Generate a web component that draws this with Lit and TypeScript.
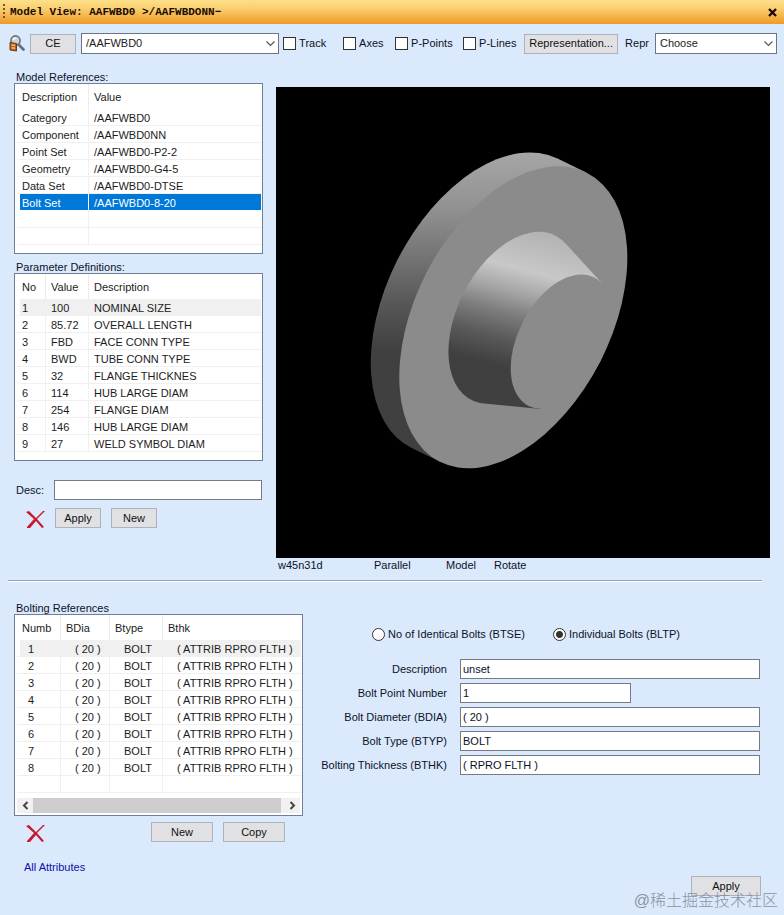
import { LitElement, html, css, svg, nothing } from "lit";
import { customElement, property } from "lit/decorators.js";

const controls = css`
  * { box-sizing: border-box; }
  button, input, select { font: inherit; color: inherit; margin: 0; border-radius: 0; }
  button {
    height: 20px;
    padding: 0;
    background: #e1e1e3;
    border: 1px solid #adb3bb;
    color: #111;
  }
  .text {
    height: 20px;
    width: 100%;
    padding: 0 2px;
    background: #fff;
    border: 1px solid #747b86;
    outline: none;
  }
`;

const cross = svg`
  <path d="M0 4 L3 3 L10 10 L17 3 L19 3 L11 11 L18 19 L16 20 L10 13 L4 20 L1 20 L1 19 L8 11 Z" fill="#c8182c"/>`;

type Row = string[];

/** List box with a header row, hairline grid and an optional scroll bar. */
@customElement("data-list")
export class DataList extends LitElement {
  @property() caption = "";
  @property({ attribute: false }) heads: string[] = [];
  @property({ attribute: false }) rows: Row[] = [];
  @property({ attribute: false }) widths: number[] = [];
  @property({ type: Number }) blanks = 0;
  @property({ type: Number }) selected = -1;
  @property({ type: Number }) shaded = -1;
  @property({ type: Boolean }) indent = false;
  @property({ type: Boolean }) scroll = false;

  static styles = [controls, css`
    :host { display: block; }
    .title { margin: 0 0 0 2px; font: inherit; line-height: 13px; padding-top: 1px; height: 13px; }
    .box { background: #fff; border: 1px solid #717f96; color: #1c1c1c; padding-bottom: 8px; }
    .box.scrolled { padding-bottom: 2px; }
    table { width: 100%; table-layout: fixed; border-collapse: separate; border-spacing: 0; }
    th, td { padding: 2px 0 0 5px; text-align: left; font-weight: normal; white-space: nowrap; overflow: hidden; }
    th:first-child, td:first-child { border-left: 5px solid transparent; padding-left: 2px; background-clip: padding-box; }
    th { height: 25px; border-right: 1px solid #ececec; }
    td { height: 17px; line-height: 14px; border-bottom: 1px solid #f0f0f0; border-right: 1px solid #f0f0f0; }
    th:last-child, td:last-child { border-right: 1px solid transparent; background-clip: padding-box; }
    .indent td { padding-left: 14px; }
    .indent td:first-child { padding-left: 8px; }
    .shaded td { background-color: #f0f0f0; }
    .selected td { background-color: #0078d7; color: #fff; border-bottom-color: #fff; border-right-color: #fff; }
    .bar { display: flex; margin: 5px 2px 0; height: 15px; background: #f1f1f1; }
    .bar button { width: 16px; height: 15px; border: 0; background: none; display: grid; place-items: center; }
    .thumb { flex: 1; background: #cdcdcd; margin-right: 3px; }
  `];

  render() {
    const blank = Array.from({ length: this.blanks }, () => this.heads.map(() => ""));
    return html`
      <h2 class="title" id="t">${this.caption}</h2>
      <div class="box ${this.scroll ? "scrolled" : ""}">
        <table class=${this.indent ? "indent" : ""} aria-labelledby="t">
          <colgroup>${this.heads.map((_, i) => this.widths[i] ? html`<col style="width:${this.widths[i]}px">` : html`<col>`)}</colgroup>
          <thead><tr>${this.heads.map((h) => html`<th scope="col">${h}</th>`)}</tr></thead>
          <tbody>${[...this.rows, ...blank].map((r, i) => html`
            <tr class=${i === this.selected ? "selected" : i === this.shaded ? "shaded" : ""}>${r.map((c) => html`<td>${c}</td>`)}</tr>`)}
          </tbody>
        </table>
        ${this.scroll ? html`
          <div class="bar">
            <button aria-label="Scroll left"><svg width="7" height="9" viewBox="0 0 7 9"><path d="M5.5 1 L2 4.5 L5.5 8" fill="none" stroke="#444" stroke-width="2"/></svg></button>
            <div class="thumb"></div>
            <button aria-label="Scroll right"><svg width="7" height="9" viewBox="0 0 7 9"><path d="M1.5 1 L5 4.5 L1.5 8" fill="none" stroke="#444" stroke-width="2"/></svg></button>
          </div>` : nothing}
      </div>`;
  }
}

@customElement("app-root")
export class AppRoot extends LitElement {
  static styles = [controls, css`
    :host {
      position: relative;
      display: flex;
      flex-direction: column;
      min-height: 100vh;
      background: #dbe9fd;
      color: #0c1226;
      font: 11px/13px "Liberation Sans", Arial, sans-serif;
    }
    .titlebar {
      display: flex;
      align-items: center;
      height: 24px;
      padding: 0 7px 0 3px;
      gap: 5px;
      background: linear-gradient(#fde08a, #f9cc6c 40%, #f3a93a 80%, #ec9c2c);
      color: #180c04;
    }
    .grip { width: 2px; height: 16px; background: repeating-linear-gradient(#6b5a3a 0 2px, transparent 2px 4px); }
    .titlebar h1 { flex: 1; margin: 0; font: bold 11px/16px "Liberation Mono", monospace; white-space: pre; }
    .close { width: 9px; height: 9px; border: 0; background: none; display: block; }
    .close svg { display: block; }

    .toolbar { display: flex; align-items: center; padding: 9px 7px 0 9px; }
    .find { display: block; margin-right: 5px; }
    .ce { width: 46px; margin-right: 5px; }
    .pick { position: relative; height: 21px; }
    .pick select {
      display: block;
      width: 100%;
      height: 100%;
      appearance: none;
      background: #fff;
      border: 1px solid #6a7686;
      padding: 0 20px 1px 4px;
      color: #222;
    }
    .pick svg { position: absolute; right: 4px; top: 8px; pointer-events: none; }
    .name { flex: 198 0 0; margin-right: 4px; }
    .repr { flex: 122 0 0; }
    .check { display: flex; align-items: center; gap: 3px; white-space: nowrap; }
    .checks { display: grid; grid-template-columns: 60px 52px 68px 61px; }
    .check input { appearance: none; width: 13px; height: 13px; background: #fff; border: 1px solid #333; }
    .represent { width: 94px; margin-right: 7px; }
    .reprlabel { margin-right: 6px; }

    .model { display: grid; grid-template-columns: 249px minmax(0, 1fr); column-gap: 13px; padding: 16px 14px 0; }
    .params { margin-top: 6px; }
    .desc { display: grid; grid-template-columns: 38px 1fr; align-items: center; margin-top: 19px; padding: 0 1px 0 2px; }
    .actions { display: flex; align-items: center; gap: 10px; margin-top: 8px; padding-left: 12px; }
    .actions button { width: 46px; }
    .actions .delete { width: 19px; height: 20px; border: 0; background: none; }
    .delete svg { display: block; }
    .view { margin-top: 17px; }
    .view svg { display: block; width: 100%; background: #000; }
    .status { display: grid; grid-template-columns: 96px 72px 48px auto; padding-left: 2px; line-height: 15px; }
    .rule { height: 2px; margin: 7px 22px 0 8px; background: linear-gradient(#93a2b8 50%, #fff 50%); border: 0; flex: none; }

    .bolting { flex: 1; display: grid; grid-template-columns: 289px minmax(0, 1fr); column-gap: 17px; padding: 19px 23px 19px 14px; }
    .boltactions { display: flex; align-items: center; margin-top: 6px; padding: 0 18px 0 12px; gap: 10px; }
    .boltactions button { width: 62px; }
    .boltactions .delete { width: 19px; height: 20px; border: 0; background: none; margin-right: auto; }
    .all { display: inline-block; margin: 19px 0 0 10px; color: #1010a8; text-decoration: none; }
    .form { display: flex; flex-direction: column; }
    .radios { display: flex; gap: 28px; margin: 27px 0 18px 52px; }
    .radio { display: flex; align-items: center; gap: 3px; white-space: nowrap; }
    .radio input { appearance: none; width: 13px; height: 13px; border: 1px solid #333; border-radius: 50%; background: #fff; }
    .radio input:checked { background: radial-gradient(circle, #333 0 3px, #fff 4px); }
    .fields { display: grid; grid-template-columns: 127px minmax(0, 1fr); column-gap: 13px; row-gap: 4px; align-items: center; margin-right: 1px; }
    .fields label { text-align: right; white-space: nowrap; }
    .fields .short { width: 57%; }
    .apply { width: 70px; margin-top: auto; align-self: flex-end; }
    .mark {
      position: absolute;
      right: 6px;
      bottom: 3px;
      font: 300 16px/22px "Liberation Sans", "Noto Sans CJK SC", sans-serif;
      color: #838b99;
      opacity: 0.9;
      pointer-events: none;
    }
  `];

  private chevron = html`<svg width="9" height="6" viewBox="0 0 9 6"><path d="M.5 .5 L4.5 4.5 L8.5 .5" fill="none" stroke="#555" stroke-width="1.2"/></svg>`;

  private model = html`
    <svg viewBox="0 0 494 471" role="img" aria-label="Flange model">
      <defs>
        <linearGradient id="rim" gradientUnits="userSpaceOnUse" x1="0" y1="65" x2="0" y2="262">
          <stop offset="0" stop-color="#a6a6a6"/><stop offset=".28" stop-color="#929292"/>
          <stop offset=".53" stop-color="#747474"/><stop offset=".78" stop-color="#565656"/>
          <stop offset="1" stop-color="#404040"/>
        </linearGradient>
        <linearGradient id="hub" gradientUnits="userSpaceOnUse" x1="266" y1="148" x2="232" y2="280">
          <stop offset="0" stop-color="#b4b4b4"/><stop offset=".28" stop-color="#c8c8c8"/>
          <stop offset=".45" stop-color="#a6a6a6"/><stop offset=".62" stop-color="#7c7c7c"/>
          <stop offset=".8" stop-color="#5a5a5a"/><stop offset="1" stop-color="#404040"/>
        </linearGradient>
      </defs>
      <path d="M281.5 71.5 A97.6 162.1 27.1 0 0 135.8 361.1 L164.5 375.1 L310.2 85.5 Z" fill="url(#rim)"/>
      <ellipse cx="237.3" cy="230.3" rx="97.6" ry="162.1" transform="rotate(27.1 237.3 230.3)" fill="#8b8b8b"/>
      <path d="M290 157 A55.6 92.3 27.1 1 0 210.3 316.7 L264.3 322 L326.7 196.9 Z" fill="url(#hub)"/>
      <ellipse cx="285.5" cy="254.7" rx="43.5" ry="72.2" transform="rotate(27.1 285.5 254.7)" fill="#8b8b8b"/>
    </svg>`;

  private refs: Row[] = [
    ["Category", "/AAFWBD0"],
    ["Component", "/AAFWBD0NN"],
    ["Point Set", "/AAFWBD0-P2-2"],
    ["Geometry", "/AAFWBD0-G4-5"],
    ["Data Set", "/AAFWBD0-DTSE"],
    ["Bolt Set", "/AAFWBD0-8-20"],
  ];

  private params: Row[] = [
    ["1", "100", "NOMINAL SIZE"],
    ["2", "85.72", "OVERALL LENGTH"],
    ["3", "FBD", "FACE CONN TYPE"],
    ["4", "BWD", "TUBE CONN TYPE"],
    ["5", "32", "FLANGE THICKNES"],
    ["6", "114", "HUB LARGE DIAM"],
    ["7", "254", "FLANGE DIAM"],
    ["8", "146", "HUB LARGE DIAM"],
    ["9", "27", "WELD SYMBOL DIAM"],
  ];

  private bolts: Row[] = Array.from({ length: 8 }, (_, i) => [String(i + 1), "( 20 )", "BOLT", "( ATTRIB RPRO FLTH )"]);

  private fields = [
    { id: "description", label: "Description", value: "unset" },
    { id: "point", label: "Bolt Point Number", value: "1", short: true },
    { id: "bdia", label: "Bolt Diameter (BDIA)", value: "( 20 )" },
    { id: "btyp", label: "Bolt Type (BTYP)", value: "BOLT" },
    { id: "bthk", label: "Bolting Thickness (BTHK)", value: "( RPRO FLTH )" },
  ];

  private deleteButton() {
    return html`<button class="delete" aria-label="Delete"><svg width="19" height="20" viewBox="0 0 19 20">${cross}</svg></button>`;
  }

  render() {
    return html`
      <header class="titlebar">
        <span class="grip"></span>
        <h1>Model View: AAFWBD0 >/AAFWBDONN−</h1>
        <button class="close" aria-label="Close"><svg width="9" height="9" viewBox="0 0 9 9"><path d="M1 1 L8 8 M8 1 L1 8" stroke="#1a0c00" stroke-width="2.4"/></svg></button>
      </header>

      <div class="toolbar">
        <svg class="find" width="16" height="17" viewBox="0 0 16 17">
          <path d="M9 9 L14.5 14.5" stroke="#5e6f84" stroke-width="2.6" stroke-linecap="round"/>
          <circle cx="6.5" cy="5.5" r="4.6" fill="#c9d6e2" stroke="#77716c" stroke-width="1.6"/>
          <path d="M4 5 Q5 3 7.5 3" fill="none" stroke="#fff" stroke-width="1.2"/>
          <path d="M1 7.5 L7.5 8.5 L7.5 16 L1 15 Z" fill="#b9641c" stroke="#6b3a14"/>
          <path d="M2.5 10 L6 10.5 M2.5 12.8 L6 13.3" stroke="#f2bb72" stroke-width="1.4"/>
        </svg>
        <button class="ce">CE</button>
        <div class="pick name"><select aria-label="Element"><option>/AAFWBD0</option></select>${this.chevron}</div>
        <div class="checks">
          ${["Track", "Axes", "P-Points", "P-Lines"].map((t) => html`<label class="check"><input type="checkbox">${t}</label>`)}
        </div>
        <button class="represent">Representation...</button>
        <label class="reprlabel" for="repr">Repr</label>
        <div class="pick repr"><select id="repr"><option>Choose</option></select>${this.chevron}</div>
      </div>

      <section class="model">
        <div>
          <data-list caption="Model References:" .heads=${["Description", "Value"]} .widths=${[74]} .rows=${this.refs} .blanks=${2} .selected=${5}></data-list>
          <data-list class="params" caption="Parameter Definitions:" .heads=${["No", "Value", "Description"]} .widths=${[31, 43]} .rows=${this.params} .shaded=${0}></data-list>
          <div class="desc"><label for="desc">Desc:</label><input class="text" id="desc" type="text"></div>
          <div class="actions">${this.deleteButton()}<button>Apply</button><button>New</button></div>
        </div>
        <div class="view">
          ${this.model}
          <div class="status"><span>w45n31d</span><span>Parallel</span><span>Model</span><span>Rotate</span></div>
        </div>
      </section>

      <hr class="rule">

      <section class="bolting">
        <div>
          <data-list caption="Bolting References" indent scroll .heads=${["Numb", "BDia", "Btype", "Bthk"]} .widths=${[46, 49, 53]} .rows=${this.bolts} .blanks=${1} .shaded=${0}></data-list>
          <div class="boltactions">${this.deleteButton()}<button>New</button><button>Copy</button></div>
          <a class="all" href="#attributes">All Attributes</a>
        </div>
        <form class="form">
          <div class="radios">
            <label class="radio"><input type="radio" name="mode">No of Identical Bolts (BTSE)</label>
            <label class="radio"><input type="radio" name="mode" checked>Individual Bolts (BLTP)</label>
          </div>
          <div class="fields">
            ${this.fields.map((f) => html`
              <label for=${f.id}>${f.label}</label>
              <input class="text ${f.short ? "short" : ""}" id=${f.id} type="text" .value=${f.value}>`)}
          </div>
          <button class="apply" type="button">Apply</button>
        </form>
      </section>
      <span class="mark">@稀土掘金技术社区</span>
    `;
  }
}
